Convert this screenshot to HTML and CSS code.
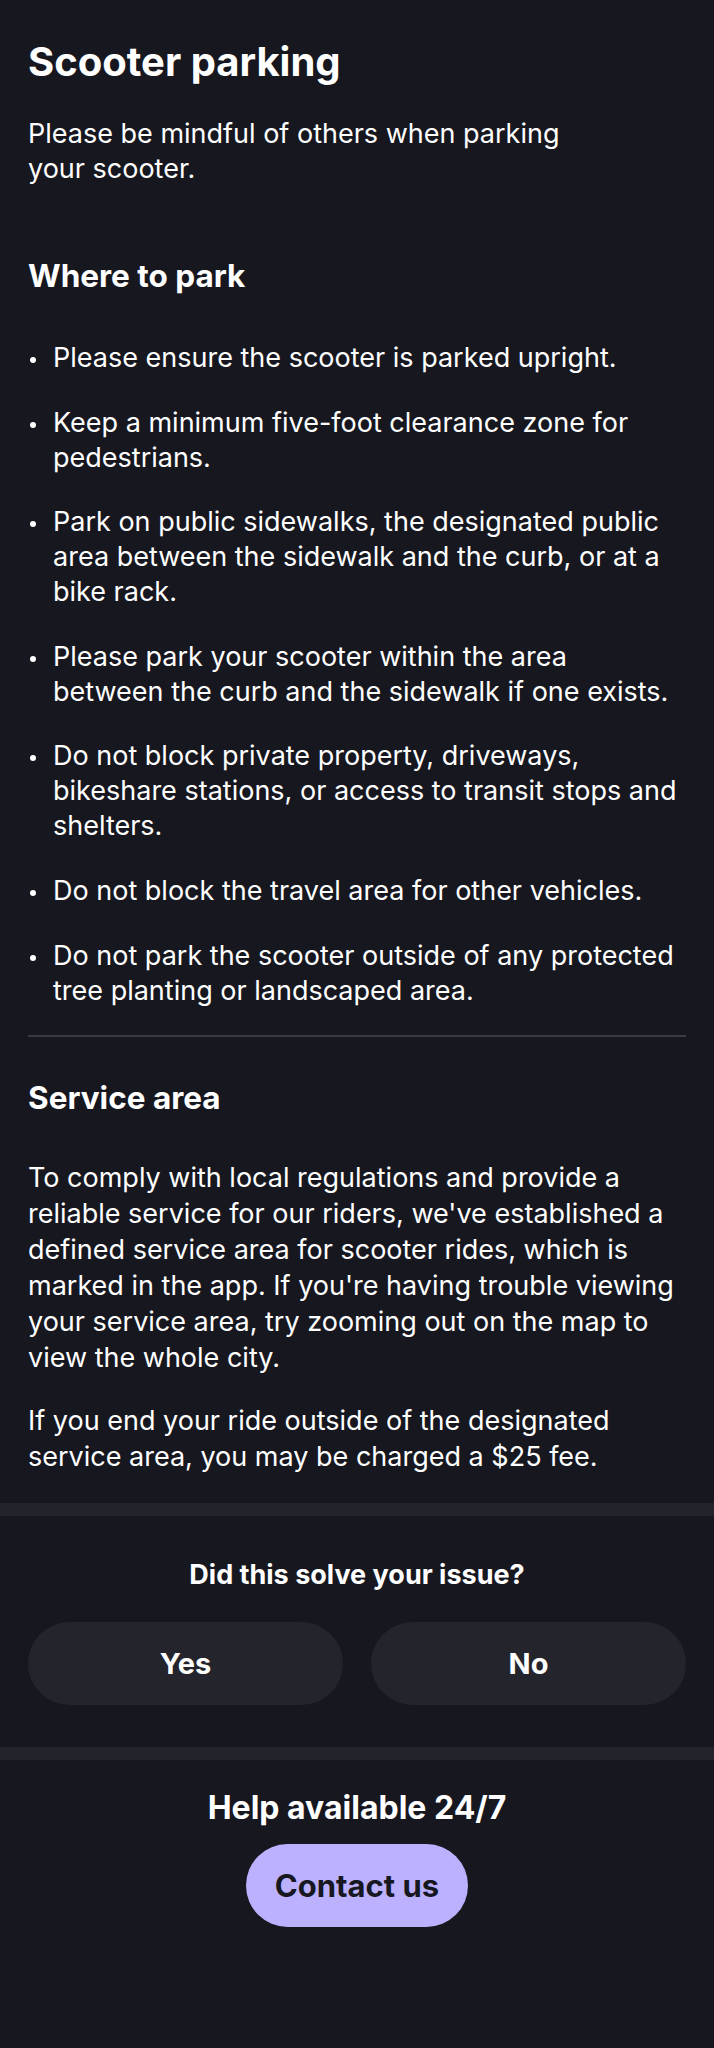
FILE: index.html
```html
<!DOCTYPE html>
<html lang="en">
<head>
<meta charset="utf-8">
<title>Scooter parking</title>
<link rel="stylesheet" href="styles.css">
</head>
<body>
<main class="article">
  <h1 class="title">Scooter parking</h1>
  <p class="intro">Please be mindful of others when parking your scooter.</p>

  <h2 class="section-title">Where to park</h2>
  <ul class="bullets">
    <li><span>Please ensure the scooter is parked upright.</span></li>
    <li><span>Keep a minimum five-foot clearance zone for pedestrians.</span></li>
    <li><span>Park on public sidewalks, the designated public area between the sidewalk and the curb, or at a bike rack.</span></li>
    <li><span>Please park your scooter within the area between the curb and the sidewalk if one exists.</span></li>
    <li><span>Do not block private property, driveways, bikeshare stations, or access to transit stops and shelters.</span></li>
    <li><span>Do not block the travel area for other vehicles.</span></li>
    <li><span>Do not park the scooter outside of any protected tree planting or landscaped area.</span></li>
  </ul>

  <hr class="divider">

  <h2 class="section-title section-title--service">Service area</h2>
  <p class="para">To comply with local regulations and provide a reliable service for our riders, we've established a defined service area for scooter rides, which is marked in the app. If you're having trouble viewing your service area, try zooming out on the map to view the whole city.</p>
  <p class="para para--last">If you end your ride outside of the designated service area, you may be charged a $25 fee.</p>
</main>

<div class="band"></div>

<section class="feedback">
  <h3 class="feedback-title">Did this solve your issue?</h3>
  <div class="feedback-buttons">
    <button class="pill">Yes</button>
    <button class="pill">No</button>
  </div>
</section>

<div class="band"></div>

<section class="help">
  <h3 class="help-title">Help available 24/7</h3>
  <button class="contact">Contact us</button>
</section>
</body>
</html>
```
FILE: styles.css
```css
html, body {
  margin: 0;
  padding: 0;
  background: #17171f;
}

body {
  color: #ffffff;
  font-family: "Inter", "Noto Sans", sans-serif;
  min-height: 2048px;
}

.article {
  padding: 38px 28px 28px;
}

.title {
  margin: 0;
  font-size: 40px;
  line-height: 48px;
  font-weight: 700;
  letter-spacing: 0;
}

.intro {
  margin: 30px 0 0;
  max-width: 560px;
  font-size: 27px;
  line-height: 35px;
}

.section-title {
  margin: 70px 0 0;
  font-size: 31.5px;
  line-height: 40px;
  font-weight: 700;
}

.section-title--service {
  margin-top: 41px;
}

.bullets {
  list-style: none;
  margin: 44px 0 0;
  padding: 0;
  display: flex;
  flex-direction: column;
  gap: 29.6px;
}

.bullets li {
  display: flex;
  gap: 17px;
  font-size: 27px;
  line-height: 35px;
}

.bullets li::before {
  content: "";
  flex: none;
  width: 6px;
  height: 6px;
  margin: 17px 0 0 2px;
  border-radius: 50%;
  background: #ffffff;
}

.bullets li span {
  max-width: 625px;
}

.divider {
  margin: 27px 0 0;
  border: 0;
  height: 2px;
  background: #3a3a44;
}

.para {
  margin: 42px 0 0;
  font-size: 27px;
  line-height: 36px;
}

.para--last {
  margin-top: 27px;
}

.band {
  height: 13px;
  background: #23232b;
}

.feedback {
  padding: 42px 28px 42px;
  text-align: center;
}

.feedback-title {
  margin: 0;
  font-size: 27px;
  line-height: 34px;
  font-weight: 700;
}

.feedback-buttons {
  margin-top: 30px;
  display: grid;
  grid-template-columns: 1fr 1fr;
  gap: 28px;
}

.pill {
  height: 83px;
  border: 0;
  border-radius: 42px;
  background: #24242c;
  color: #ffffff;
  font-family: inherit;
  font-size: 29px;
  font-weight: 700;
  padding: 0;
}

.help {
  padding: 28px 28px 0;
  display: flex;
  flex-direction: column;
  align-items: center;
}

.help-title {
  margin: 0;
  font-size: 32px;
  line-height: 40px;
  font-weight: 700;
}

.contact {
  margin-top: 16px;
  height: 83px;
  padding: 0 29px;
  border: 0;
  border-radius: 42px;
  background: #bcb1ff;
  color: #17171f;
  font-family: inherit;
  font-size: 31px;
  font-weight: 700;
}
```
